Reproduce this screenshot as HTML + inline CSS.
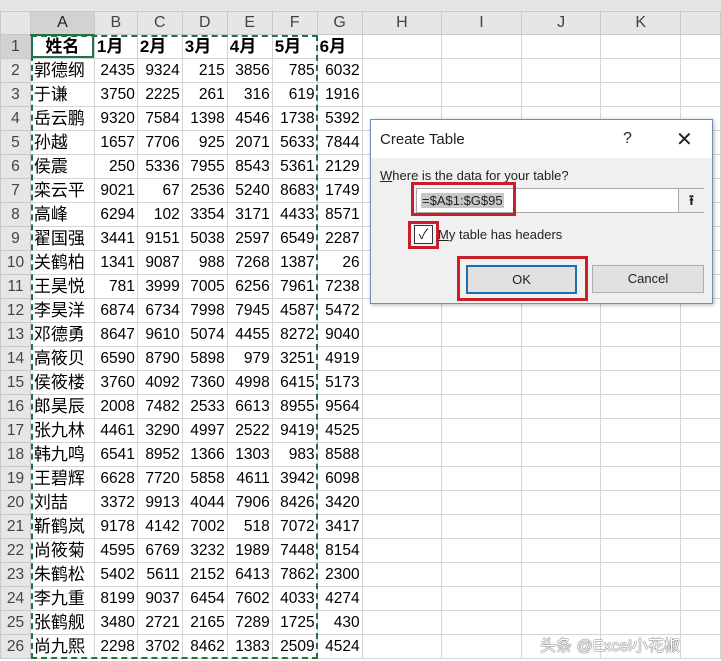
<!DOCTYPE html>
<html><head><meta charset="utf-8"><style>
body{margin:0;width:721px;height:661px;overflow:hidden;background:#fff;position:relative;font-family:"Liberation Sans","Noto Sans CJK SC",sans-serif}
.top{position:absolute;left:0;top:0;width:721px;height:11px;background:#e6e6e6}
table{position:absolute;left:0;top:11px;border-collapse:collapse;table-layout:fixed}
tr{height:24px}
tr.h{height:23px}
td{border:1px solid #d4d4d4;padding:0 2px;font-size:15.5px;line-height:20px;text-align:right;white-space:nowrap;overflow:hidden;color:#000}
tr.h td{background:#e6e6e6;text-align:center;color:#444;font-size:16px;border-color:#c8c8c8}
tr.h td.a{background:#d2d2d2;color:#222;border-bottom:2px solid #217346}
td.r{background:#e6e6e6;text-align:center;color:#444;border-color:#c8c8c8;padding:0}
td.r1{background:#d2d2d2}
td.n{text-align:left;font-size:17px;padding-left:3px}
tr.b td{font-weight:bold;font-size:17px;text-align:left}
.sel{position:absolute;left:31px;top:35px;width:287px;height:624px;border:2px dashed #217346;box-sizing:border-box}
.dlg{position:absolute;left:370px;top:119px;width:343px;height:185px;background:#f0f0f0;border:1px solid #6d8fb8;box-sizing:border-box;box-shadow:1px 1px 4px rgba(0,0,0,.3);font-size:13px;color:#222}
.tb{position:absolute;left:0;top:0;width:341px;height:38px;background:#fff}
.abs{position:absolute}
.red{position:absolute;border:3px solid #c8202a;box-sizing:border-box}
.wm{position:absolute;left:540px;top:637px;font-size:16px;line-height:20px;color:#fff;text-shadow:0 0 1px #333,0 0 1px #333}
</style></head><body>
<div class="top"></div>
<table>
<colgroup><col style="width:30px"><col style="width:64px"><col style="width:43px"><col style="width:45px"><col style="width:45px"><col style="width:45px"><col style="width:45px"><col style="width:45px"><col style="width:80px"><col style="width:80px"><col style="width:80px"><col style="width:80px"><col style="width:40px"></colgroup>
<tr class="h"><td style="background:#e6e6e6"></td><td class="a">A</td><td>B</td><td>C</td><td>D</td><td>E</td><td>F</td><td>G</td><td>H</td><td>I</td><td>J</td><td>K</td><td></td></tr>
<tr class="b"><td class="r r1" style="font-weight:normal;font-size:16px;text-align:center">1</td><td style="text-align:center">姓名</td><td>1月</td><td>2月</td><td>3月</td><td>4月</td><td>5月</td><td>6月</td><td></td><td></td><td></td><td></td><td></td></tr>
<tr><td class="r">2</td><td class="n">郭德纲</td><td>2435</td><td>9324</td><td>215</td><td>3856</td><td>785</td><td>6032</td><td></td><td></td><td></td><td></td><td></td></tr>
<tr><td class="r">3</td><td class="n">于谦</td><td>3750</td><td>2225</td><td>261</td><td>316</td><td>619</td><td>1916</td><td></td><td></td><td></td><td></td><td></td></tr>
<tr><td class="r">4</td><td class="n">岳云鹏</td><td>9320</td><td>7584</td><td>1398</td><td>4546</td><td>1738</td><td>5392</td><td></td><td></td><td></td><td></td><td></td></tr>
<tr><td class="r">5</td><td class="n">孙越</td><td>1657</td><td>7706</td><td>925</td><td>2071</td><td>5633</td><td>7844</td><td></td><td></td><td></td><td></td><td></td></tr>
<tr><td class="r">6</td><td class="n">侯震</td><td>250</td><td>5336</td><td>7955</td><td>8543</td><td>5361</td><td>2129</td><td></td><td></td><td></td><td></td><td></td></tr>
<tr><td class="r">7</td><td class="n">栾云平</td><td>9021</td><td>67</td><td>2536</td><td>5240</td><td>8683</td><td>1749</td><td></td><td></td><td></td><td></td><td></td></tr>
<tr><td class="r">8</td><td class="n">高峰</td><td>6294</td><td>102</td><td>3354</td><td>3171</td><td>4433</td><td>8571</td><td></td><td></td><td></td><td></td><td></td></tr>
<tr><td class="r">9</td><td class="n">翟国强</td><td>3441</td><td>9151</td><td>5038</td><td>2597</td><td>6549</td><td>2287</td><td></td><td></td><td></td><td></td><td></td></tr>
<tr><td class="r">10</td><td class="n">关鹤柏</td><td>1341</td><td>9087</td><td>988</td><td>7268</td><td>1387</td><td>26</td><td></td><td></td><td></td><td></td><td></td></tr>
<tr><td class="r">11</td><td class="n">王昊悦</td><td>781</td><td>3999</td><td>7005</td><td>6256</td><td>7961</td><td>7238</td><td></td><td></td><td></td><td></td><td></td></tr>
<tr><td class="r">12</td><td class="n">李昊洋</td><td>6874</td><td>6734</td><td>7998</td><td>7945</td><td>4587</td><td>5472</td><td></td><td></td><td></td><td></td><td></td></tr>
<tr><td class="r">13</td><td class="n">邓德勇</td><td>8647</td><td>9610</td><td>5074</td><td>4455</td><td>8272</td><td>9040</td><td></td><td></td><td></td><td></td><td></td></tr>
<tr><td class="r">14</td><td class="n">高筱贝</td><td>6590</td><td>8790</td><td>5898</td><td>979</td><td>3251</td><td>4919</td><td></td><td></td><td></td><td></td><td></td></tr>
<tr><td class="r">15</td><td class="n">侯筱楼</td><td>3760</td><td>4092</td><td>7360</td><td>4998</td><td>6415</td><td>5173</td><td></td><td></td><td></td><td></td><td></td></tr>
<tr><td class="r">16</td><td class="n">郎昊辰</td><td>2008</td><td>7482</td><td>2533</td><td>6613</td><td>8955</td><td>9564</td><td></td><td></td><td></td><td></td><td></td></tr>
<tr><td class="r">17</td><td class="n">张九林</td><td>4461</td><td>3290</td><td>4997</td><td>2522</td><td>9419</td><td>4525</td><td></td><td></td><td></td><td></td><td></td></tr>
<tr><td class="r">18</td><td class="n">韩九鸣</td><td>6541</td><td>8952</td><td>1366</td><td>1303</td><td>983</td><td>8588</td><td></td><td></td><td></td><td></td><td></td></tr>
<tr><td class="r">19</td><td class="n">王碧辉</td><td>6628</td><td>7720</td><td>5858</td><td>4611</td><td>3942</td><td>6098</td><td></td><td></td><td></td><td></td><td></td></tr>
<tr><td class="r">20</td><td class="n">刘喆</td><td>3372</td><td>9913</td><td>4044</td><td>7906</td><td>8426</td><td>3420</td><td></td><td></td><td></td><td></td><td></td></tr>
<tr><td class="r">21</td><td class="n">靳鹤岚</td><td>9178</td><td>4142</td><td>7002</td><td>518</td><td>7072</td><td>3417</td><td></td><td></td><td></td><td></td><td></td></tr>
<tr><td class="r">22</td><td class="n">尚筱菊</td><td>4595</td><td>6769</td><td>3232</td><td>1989</td><td>7448</td><td>8154</td><td></td><td></td><td></td><td></td><td></td></tr>
<tr><td class="r">23</td><td class="n">朱鹤松</td><td>5402</td><td>5611</td><td>2152</td><td>6413</td><td>7862</td><td>2300</td><td></td><td></td><td></td><td></td><td></td></tr>
<tr><td class="r">24</td><td class="n">李九重</td><td>8199</td><td>9037</td><td>6454</td><td>7602</td><td>4033</td><td>4274</td><td></td><td></td><td></td><td></td><td></td></tr>
<tr><td class="r">25</td><td class="n">张鹤舰</td><td>3480</td><td>2721</td><td>2165</td><td>7289</td><td>1725</td><td>430</td><td></td><td></td><td></td><td></td><td></td></tr>
<tr><td class="r">26</td><td class="n">尚九熙</td><td>2298</td><td>3702</td><td>8462</td><td>1383</td><td>2509</td><td>4524</td><td></td><td></td><td></td><td></td><td></td></tr>
</table>
<div class="sel"></div>
<div class="abs" style="left:31px;top:34px;width:63px;height:24px;border:2px solid #217346;box-sizing:border-box"></div>
<div class="wm">头条 @Excel小花椒</div>
<div class="dlg">
 <div class="tb"></div>
 <div class="abs" style="left:9px;top:11px;font-size:15px">Create Table</div>
 <div class="abs" style="left:252px;top:10px;font-size:16px">?</div>
 <div class="abs" style="left:305px;top:7px;font-size:20px;font-weight:300">✕</div>
 <div class="abs" style="left:9px;top:48px"><u>W</u>here is the data for your table?</div>
 <div class="abs" style="left:45px;top:68px;width:288px;height:25px;background:#fff;border:1px solid #aaa;box-sizing:border-box"></div>
 <div class="abs" style="left:50px;top:73px;background:#c8c8c8;padding:0 1px;font-size:13px">=$A$1:$G$95</div>
 <div class="abs" style="left:307px;top:69px;width:25px;height:23px;background:#f0f0f0;border-left:1px solid #aaa;text-align:center;font-size:14px;font-weight:bold;line-height:23px">⭱</div>
 <div class="red" style="left:40px;top:62px;width:105px;height:34px"></div>
 <div class="abs" style="left:43px;top:105px;width:19px;height:19px;background:#fff;border:1px solid #333;box-sizing:border-box;text-align:center;line-height:17px;font-size:14px">✓</div>
 <div class="red" style="left:37px;top:101px;width:31px;height:28px"></div>
 <div class="abs" style="left:67px;top:107px"><u>M</u>y table has headers</div>
 <div class="abs" style="left:95px;top:145px;width:111px;height:29px;background:#e1e1e1;border:2px solid #1e6fb0;box-sizing:border-box;text-align:center;line-height:25px">OK</div>
 <div class="red" style="left:86px;top:136px;width:131px;height:45px"></div>
 <div class="abs" style="left:221px;top:145px;width:112px;height:28px;background:#e1e1e1;border:1px solid #adadad;box-sizing:border-box;text-align:center;line-height:26px">Cancel</div>
</div>
</body></html>
